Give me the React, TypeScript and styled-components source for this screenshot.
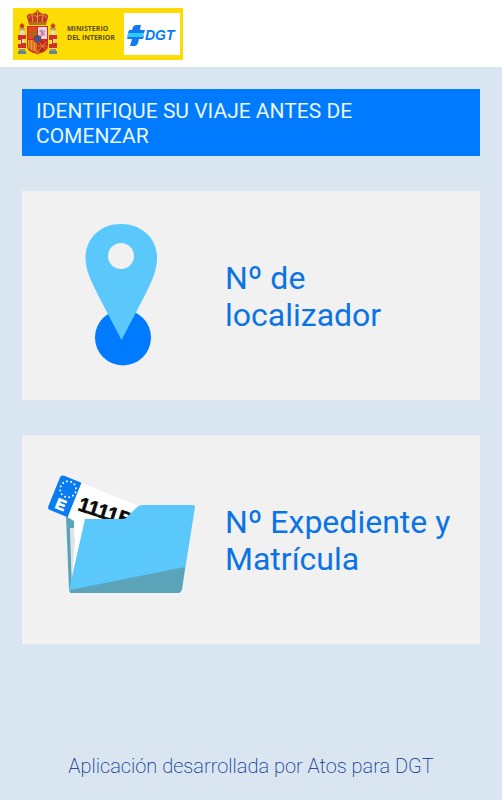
import React from "react";
import styled, { createGlobalStyle } from "styled-components";

const GlobalStyle = createGlobalStyle`
  *, *::before, *::after { box-sizing: border-box; }
  body {
    margin: 0;
    background: #d9e5f1;
    font-family: Roboto, "Liberation Sans", sans-serif;
  }
`;

const Page = styled.div`
  display: flex;
  flex-direction: column;
  min-height: 100vh;
`;

const Header = styled.header`
  display: flex;
  padding: 8px 13px 7px;
  background: #fff;
`;

const Main = styled.main`
  display: flex;
  flex-direction: column;
  gap: 35px;
  padding: 22px 22px 0;
`;

const Title = styled.h1`
  margin: 0;
  padding: 10px 14px 7px;
  background: #007aff;
  color: #e9f7ff;
  font-size: 21px;
  font-weight: 400;
  line-height: 25px;
`;

const Card = styled.button`
  display: grid;
  grid-template-columns: 203px 1fr;
  align-items: center;
  width: 100%;
  padding: 20px 0;
  border: 0;
  background: #f1f1f1;
  color: #0b74e5;
  font: inherit;
  text-align: left;
  cursor: pointer;
`;

const Picture = styled.svg`
  display: block;
  width: 165px;
  height: 169px;
  justify-self: center;
`;

const Label = styled.span`
  padding: 2px 16px 0 0;
  font-size: 32px;
  line-height: 37px;
`;

const Footer = styled.footer`
  margin-top: auto;
  padding: 16px 22px 22px;
  color: #063289;
  font-size: 20px;
  font-weight: 200;
  line-height: 24px;
  text-align: center;
`;

const LogoArt = styled.svg`
  display: block;
  width: 170px;
  height: 52px;
`;

function Pillar() {
  return (
    <g>
      <path d="M1.5 2.500 4 0l2.500 2.500-1 2.500h-3z" fill="#c9421e" />
      <path d="M1 5h6v2.500H1z" fill="#c5a64a" />
      <path d="M2 7.500h4V27H2z" fill="#d8dcd3" />
      <path d="M0 12h8v4H4v4h4v5H0v-4h3v-4H0z" fill="#d3301f" />
      <path d="M1 26h6v2H1z" fill="#b19138" />
      <path d="M0 28h8v3H0z" fill="#5c8898" />
    </g>
  );
}

function MinistryLogo() {
  return (
    <LogoArt viewBox="0 0 170 52" role="img" aria-label="Ministerio del Interior, DGT">
      <path d="M0 0h170v52H0z" fill="#fddc05" />
      <g transform="translate(5 15)"><Pillar /></g>
      <g transform="translate(36 15)"><Pillar /></g>
      <path d="M15 12c-3-5 1-7 4-6l4-2 1-2h1l1 2 4 2c4-1 7 2 4 6l-1 5H16z" fill="#c33a20" />
      <path d="M15 10c3-4 6-4 9-1 4-3 7-3 10 1M24.500 3v12M19 7l1 8M30 7l-1 8" fill="none" stroke="#d99a3b" />
      <path d="M16 14h17v3H16z" fill="#b86e21" />
      <path d="M14 18h21v20q0 6-10.500 8Q14 44 14 38z" fill="#d52a1c" />
      <path d="M15 19h9v12h-9z" fill="#e34620" />
      <path d="M25 19h9v12h-9z" fill="#f4d9e5" />
      <path d="M17 29v-7h2v2h2v-2h2v7z" fill="#a96917" />
      <path d="m27 29 1-4-2-2 3-2 1 2 3-1-2 3 2 3-3-1-1 2z" fill="#bd87af" />
      <path d="M15 32h9v12q-9-2-9-6z" fill="#e3a229" />
      <path d="M17 32v10M20 32v11M23 32v12" stroke="#d64325" />
      <path d="M25 33h9v5q0 5-9 6z" fill="#bd2820" />
      <path d="m26 34 7 8m0-8-7 8m-1-4h9" stroke="#de8b28" />
      <circle cx="24.500" cy="31" r="3.500" fill="#345e92" stroke="#a52c2b" />
      <path d="m22 44 2.500-3 2.500 3-2.500 3z" fill="#cf6d22" />
      <g fill="#5c4e14" fontFamily="Open Sans, sans-serif" fontSize="7" fontWeight="700">
        <text x="54" y="23">MINISTERIO</text>
        <text x="54" y="32">DEL INTERIOR</text>
      </g>
      <path d="M111 5h56v42h-56z" fill="#fff" />
      <path d="M115 25l1-3h3l1-3q1-2 3-2h5l-1 5h5l-1 3z" fill="#1479ee" />
      <path d="M114 31l1-3h16l-1 3h-4l-1 4q-1 3-3 3h-5l2-7z" fill="#1479ee" />
      <path d="M115 25h16l-1 4h-16z" fill="#2ccdf0" />
      <text x="132" y="32" fill="#087cf0" fontFamily="Liberation Sans, sans-serif" fontSize="14" fontWeight="700" fontStyle="italic">DGT</text>
    </LogoArt>
  );
}

function LocatorPin() {
  return (
    <Picture viewBox="41 211 165 169" aria-hidden="true">
      <circle cx="123" cy="337.500" r="28" fill="#007aff" />
      <path
        d="M121.500 340 98 295C90 279 85.500 269 85.500 258c0-20 15-34 35.500-34s36 14 36 34c0 11-4 21-12 37z"
        fill="#5ac8fa"
      />
      <circle cx="121" cy="256" r="13" fill="#f1f1f1" />
    </Picture>
  );
}

const starAngles = Array.from({ length: 12 }, (_, i) => (i * Math.PI) / 6);

function PlateFolder() {
  return (
    <Picture viewBox="41 455 165 169" aria-hidden="true">
      <path d="m66 515 18-2 5 7-18 70z" fill="#fff" />
      <path d="m70 528 4 0 1 14-3 38z" fill="#e2e5e5" />
      <path d="m66 516 8 5v7h-4l2 60-2 4-1-2z" fill="#5ba3b9" />
      <g transform="translate(62 475) rotate(22)">
        <path d="M20 0h65v37H20z" fill="#fff" />
        <path d="M3 0h18v37H2q-3 0-3-3V3q0-3 4-3z" fill="#087cf0" />
        {starAngles.map((a) => (
          <circle key={a} cx={11 + 8 * Math.cos(a)} cy={11 + 8 * Math.sin(a)} r="1" fill="#eefaff" />
        ))}
        <text x="5" y="33" fill="#fff" stroke="#fff" strokeWidth="0.8" fontFamily="Liberation Sans, sans-serif" fontSize="15" fontWeight="700">E</text>
      </g>
      <text
        transform="translate(77 510) rotate(18)"
        fill="#080808"
        stroke="#080808"
        strokeWidth="0.6"
        fontFamily="Liberation Sans, sans-serif"
        fontSize="20"
        fontWeight="700"
      >
        1111B
      </text>
      <path
        d="M85 519h38q3 0 5-3l8-8q3-3 6-3h51q2 0 2 2l-13 82q-1 3-3 3H70l-1-2z"
        fill="#5ac8fa"
      />
      <path d="m70 590 115-23-3 22q-1 4-4 4H70z" fill="#5ba3b9" />
    </Picture>
  );
}

export default function App() {
  return (
    <Page>
      <GlobalStyle />
      <Header>
        <MinistryLogo />
      </Header>
      <Main>
        <Title>IDENTIFIQUE SU VIAJE ANTES DE COMENZAR</Title>
        <Card type="button">
          <LocatorPin />
          <Label>Nº de localizador</Label>
        </Card>
        <Card type="button">
          <PlateFolder />
          <Label>Nº Expediente y Matrícula</Label>
        </Card>
      </Main>
      <Footer>Aplicación desarrollada por Atos para DGT</Footer>
    </Page>
  );
}
